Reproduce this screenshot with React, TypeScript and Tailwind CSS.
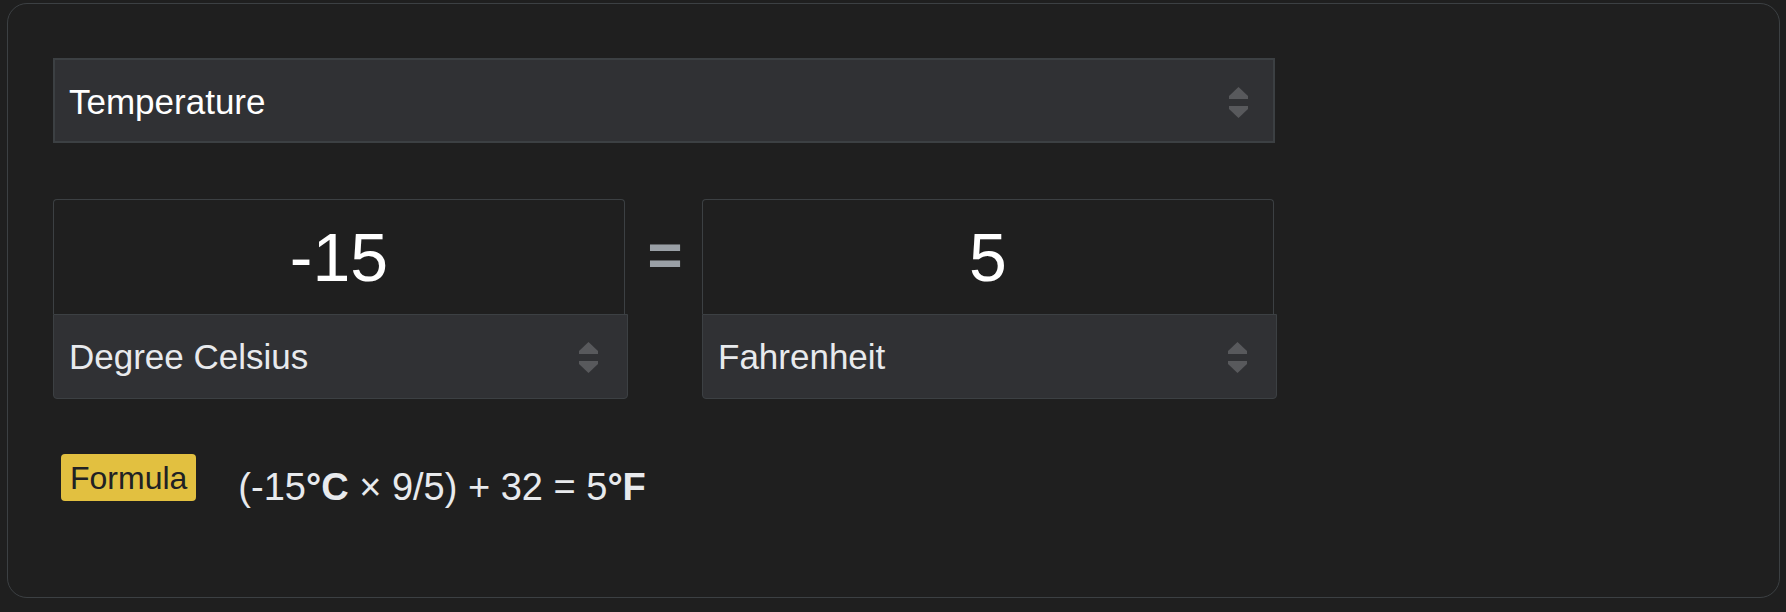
import React from 'react'

function Arrows() {
  return (
    <svg width="19" height="31" viewBox="0 0 19 31" className="shrink-0">
      <polygon points="9.5,0 19,9 19,12 0,12 0,9" fill="#58595c" />
      <polygon points="0,19 19,19 19,22 9.5,31 0,22" fill="#58595c" />
    </svg>
  )
}

function UnitBox({ value, unit }: { value: string; unit: string }) {
  return (
    <div className="flex flex-col">
      {/* value field */}
      <div className="w-[572px] h-[115px] flex items-center justify-center border border-b-0 border-[#3c4043] rounded-t-[4px] bg-[#1f1f1f] text-white text-[68px] leading-none">
        {value}
      </div>
      {/* unit picker */}
      <div className="w-[575px] h-[85px] flex items-center justify-between pl-[15px] pr-[29px] pt-[1px] border border-[#3c4043] rounded-b-[4px] bg-[#303134] text-[#e8eaed] text-[35px]">
        <span>{unit}</span>
        <Arrows />
      </div>
    </div>
  )
}

export default function App() {
  return (
    <div className="w-[1786px] h-[612px] bg-[#1f1f1f] pt-[3px] pl-[7px]" style={{ fontFamily: '"Liberation Sans", Arial, sans-serif' }}>
      <div className="w-[1773px] h-[595px] border border-[#3c4043] rounded-[20px] pt-[54px] pl-[45px]">
        {/* measurement type */}
        <div className="w-[1222px] h-[85px] flex items-center justify-between pl-[14px] pr-[25px] pt-[3px] border-2 border-[#3c4043] bg-[#303134] text-white text-[35px]">
          <span>Temperature</span>
          <Arrows />
        </div>

        <div className="flex items-start mt-[56px]">
          <UnitBox value="-15" unit="Degree Celsius" />
          <div className="w-[74px] h-[115px] flex items-center justify-center text-[#9aa0a6] text-[60px] font-bold leading-none pb-[4px]">
            =
          </div>
          <UnitBox value="5" unit="Fahrenheit" />
        </div>

        <div className="flex items-start mt-[55px] pl-[8px]">
          <div className="h-[47px] px-[9px] flex items-center rounded-[4px] bg-[#e2c040] text-[#202124] text-[32px]">
            Formula
          </div>
          <div className="ml-[42px] mt-[5px] text-[#e8eaed] text-[38px]">
            (-15<b>°C</b> × 9/5) + 32 = 5<b>°F</b>
          </div>
        </div>
      </div>
    </div>
  )
}
